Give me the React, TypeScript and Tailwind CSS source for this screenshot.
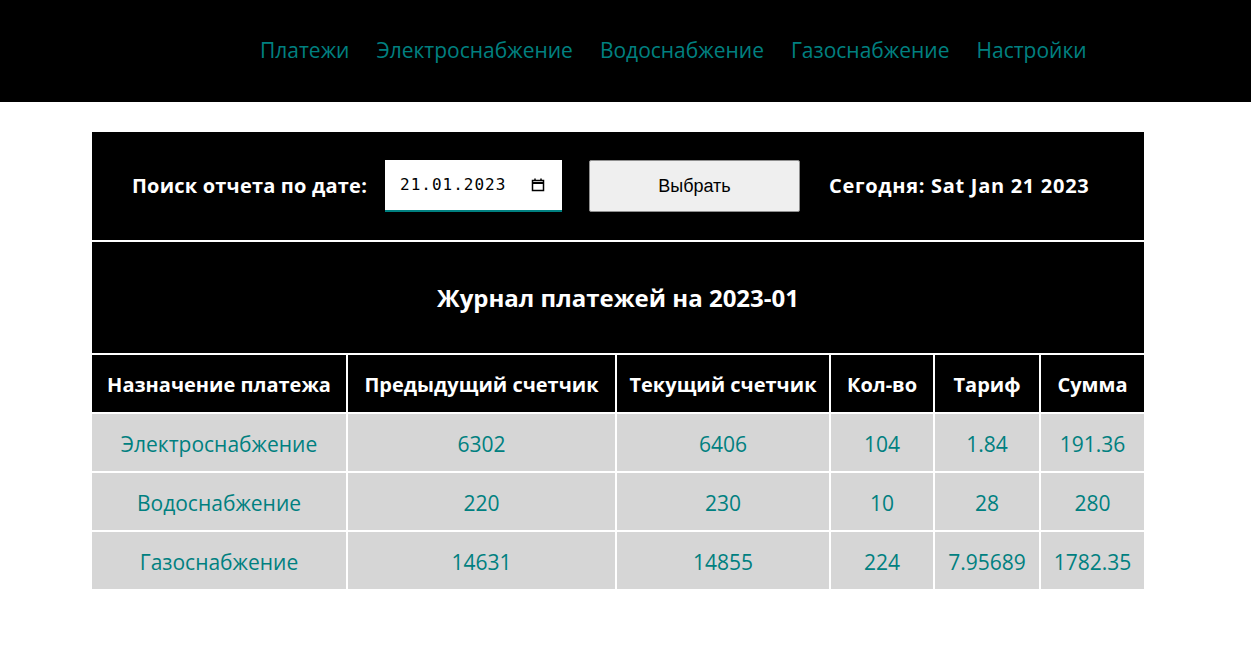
import React from 'react';

const navLinks = ['Платежи', 'Электроснабжение', 'Водоснабжение', 'Газоснабжение', 'Настройки'];

const rows = [
  ['Электроснабжение', '6302', '6406', '104', '1.84', '191.36'],
  ['Водоснабжение', '220', '230', '10', '28', '280'],
  ['Газоснабжение', '14631', '14855', '224', '7.95689', '1782.35'],
];

const headers = ['Назначение платежа', 'Предыдущий счетчик', 'Текущий счетчик', 'Кол-во', 'Тариф', 'Сумма'];

const CalendarIcon = () => (
  <svg width="14" height="14" viewBox="0 0 14 14" fill="none" stroke="#000" strokeWidth="1.5">
    <rect x="1.5" y="2.5" width="11" height="10" />
    <line x1="1.5" y1="5" x2="12.5" y2="5" strokeWidth="2" />
    <line x1="4" y1="0.5" x2="4" y2="3" />
    <line x1="10" y1="0.5" x2="10" y2="3" />
  </svg>
);

export default function App() {
  return (
    <div className="min-h-[671px] bg-white" style={{ fontFamily: '"Open Sans", "Noto Sans", sans-serif' }}>
      {/* Header */}
      <header className="h-[102px] pb-[2px] bg-black flex items-center pl-[260px] gap-[27px]">
        {navLinks.map((l) => (
          <a key={l} href="#" className="text-[21px] text-[#008080] leading-none">
            {l}
          </a>
        ))}
      </header>

      <div className="ml-[92px] mt-[30px] w-[1052px] flex flex-col gap-[2px]">
        {/* Search */}
        <div className="h-[108px] bg-black flex items-center pl-[40px]">
          <span className="w-[253px] whitespace-nowrap text-white font-bold text-[20px] tracking-[0.2px]">
            Поиск отчета по дате:
          </span>
          <div className="w-[177px] h-[52px] bg-white border-b-2 border-[#008080] flex items-center justify-between pl-[15px] pr-[17px]">
            <span
              className="text-[16px] tracking-[1px] text-black"
              style={{ fontFamily: '"DejaVu Sans Mono", monospace' }}
            >
              21.01.2023
            </span>
            <CalendarIcon />
          </div>
          <button
            className="ml-[27px] w-[211px] h-[52px] bg-[#efefef] border border-[#8f8f8f] rounded-[2px] text-[18px] text-black"
            style={{ fontFamily: '"Liberation Sans", Arial, sans-serif' }}
          >
            Выбрать
          </button>
          <span className="ml-[29px] whitespace-nowrap text-white font-bold text-[20px] tracking-[0.7px]">
            Сегодня: Sat Jan 21 2023
          </span>
        </div>

        {/* Title */}
        <div className="h-[111px] bg-black flex items-center justify-center">
          <h2 className="text-white font-bold text-[24px]">Журнал платежей на 2023-01</h2>
        </div>

        {/* Table */}
        <div className="grid grid-cols-[254px_267px_212px_102px_104px_103px] gap-[2px] bg-white">
          {headers.map((h) => (
            <div key={h} className="h-[57px] pt-[3px] bg-black text-white font-bold text-[20px] flex items-center justify-center whitespace-nowrap">
              {h}
            </div>
          ))}
          {rows.map((r) =>
            r.map((c, i) => (
              <div key={r[0] + i} className="h-[57px] pt-[4px] bg-[#d6d6d6] text-[#008080] text-[21px] flex items-center justify-center whitespace-nowrap">
                {c}
              </div>
            ))
          )}
        </div>
      </div>
    </div>
  );
}
